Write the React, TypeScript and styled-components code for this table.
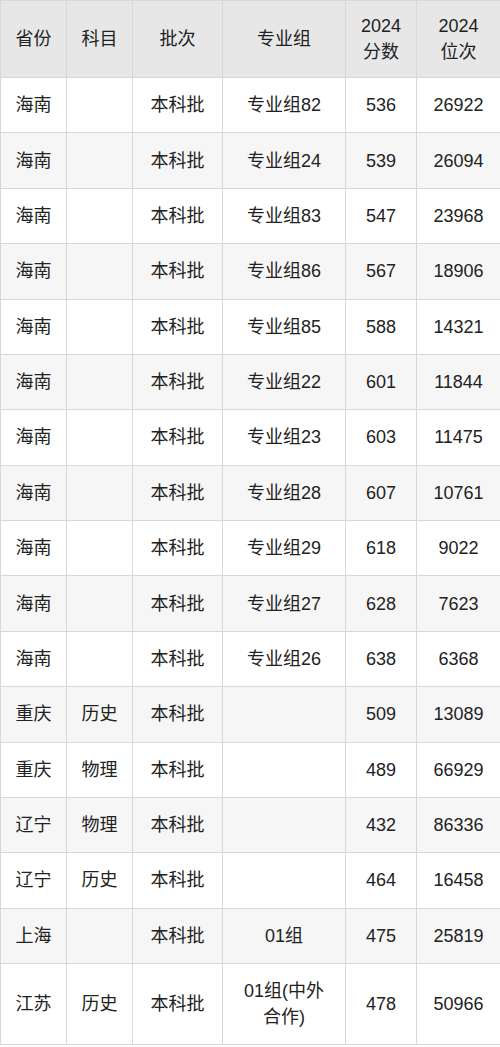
import React from "react";
import styled, { createGlobalStyle } from "styled-components";

const GlobalStyle = createGlobalStyle`
  html, body {
    margin: 0;
    padding: 0;
    background: #ffffff;
  }
  body {
    font-family: "Liberation Sans", "Noto Sans CJK SC", sans-serif;
    color: #222222;
  }
`;

const Table = styled.table`
  width: 500px;
  table-layout: fixed;
  border-collapse: collapse;
  font-size: 18px;
  line-height: 26px;
`;

const HeadCell = styled.th`
  background: #e7e7e7;
  border: 1px solid #d8d8d8;
  padding: 12px 4px;
  font-weight: normal;
  text-align: center;
  vertical-align: middle;
`;

const Row = styled.tr<{ $striped: boolean }>`
  background: ${(p) => (p.$striped ? "#f6f6f6" : "#ffffff")};
`;

const Cell = styled.td<{ $wide?: boolean }>`
  border: 1px solid #d8d8d8;
  padding: 14.2px ${(p) => (p.$wide ? "17px" : "4px")};
  text-align: center;
  vertical-align: middle;
  word-break: break-all;
`;

const widths = [66, 66, 90, 123, 71, 84];

type Item = [string, string, string, string, string, string];

const rows: Item[] = [
  ["海南", "", "本科批", "专业组82", "536", "26922"],
  ["海南", "", "本科批", "专业组24", "539", "26094"],
  ["海南", "", "本科批", "专业组83", "547", "23968"],
  ["海南", "", "本科批", "专业组86", "567", "18906"],
  ["海南", "", "本科批", "专业组85", "588", "14321"],
  ["海南", "", "本科批", "专业组22", "601", "11844"],
  ["海南", "", "本科批", "专业组23", "603", "11475"],
  ["海南", "", "本科批", "专业组28", "607", "10761"],
  ["海南", "", "本科批", "专业组29", "618", "9022"],
  ["海南", "", "本科批", "专业组27", "628", "7623"],
  ["海南", "", "本科批", "专业组26", "638", "6368"],
  ["重庆", "历史", "本科批", "", "509", "13089"],
  ["重庆", "物理", "本科批", "", "489", "66929"],
  ["辽宁", "物理", "本科批", "", "432", "86336"],
  ["辽宁", "历史", "本科批", "", "464", "16458"],
  ["上海", "", "本科批", "01组", "475", "25819"],
  ["江苏", "历史", "本科批", "01组(中外合作)", "478", "50966"],
];

export default function App() {
  return (
    <>
      <GlobalStyle />
      <Table>
        <colgroup>
          {widths.map((w, i) => (
            <col key={i} style={{ width: w }} />
          ))}
        </colgroup>
        <thead>
          <tr>
            <HeadCell>省份</HeadCell>
            <HeadCell>科目</HeadCell>
            <HeadCell>批次</HeadCell>
            <HeadCell>专业组</HeadCell>
            <HeadCell>
              2024
              <br />
              分数
            </HeadCell>
            <HeadCell>
              2024
              <br />
              位次
            </HeadCell>
          </tr>
        </thead>
        <tbody>
          {rows.map((r, i) => (
            <Row key={i} $striped={i % 2 === 1}>
              {r.map((c, j) => (
                <Cell key={j} $wide={j === 3}>
                  {c}
                </Cell>
              ))}
            </Row>
          ))}
        </tbody>
      </Table>
    </>
  );
}
